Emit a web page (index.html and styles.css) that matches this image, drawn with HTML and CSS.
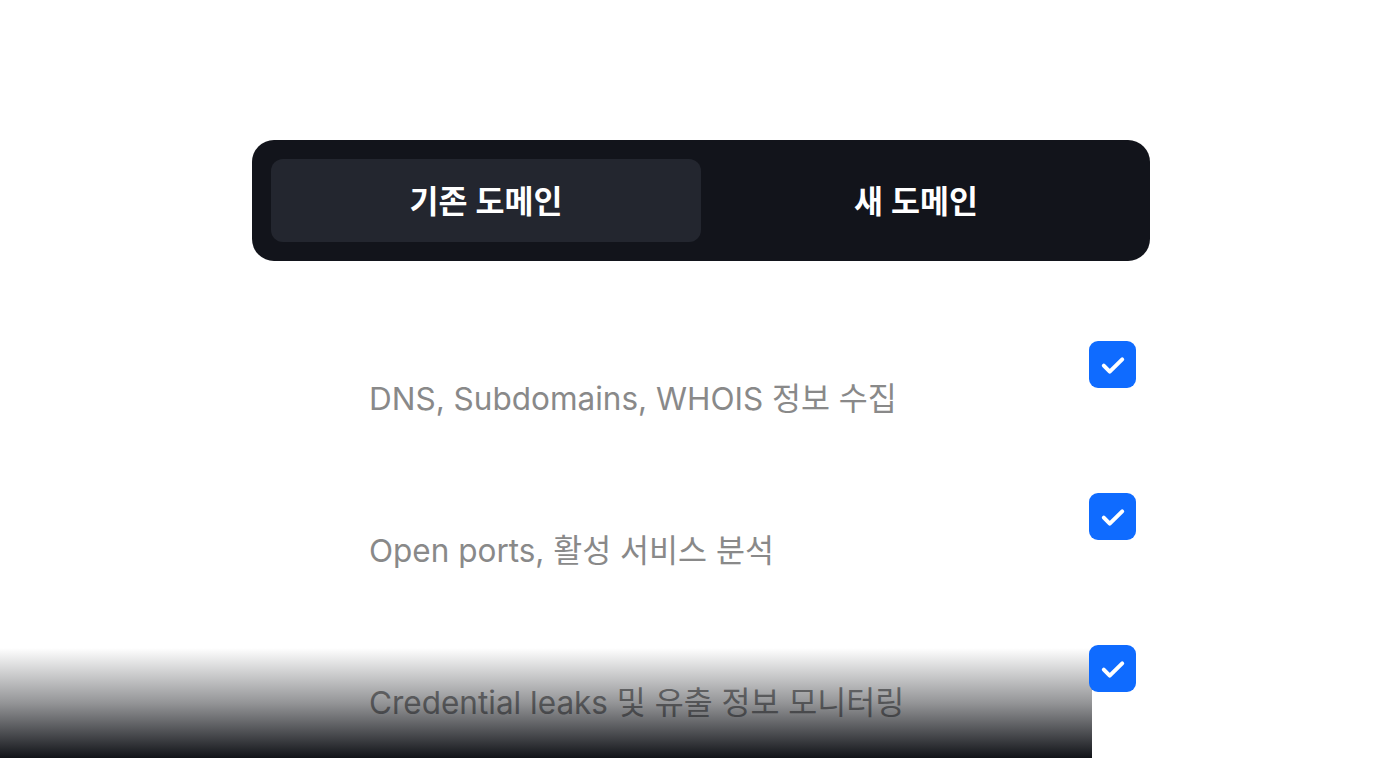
FILE: index.html
```html
<!DOCTYPE html>
<html lang="ko">
<head>
<meta charset="utf-8">
<link rel="stylesheet" href="styles.css">
</head>
<body>
<main class="page">
  <div class="tabs">
    <button class="tab tab-active">기존 도메인</button>
    <button class="tab">새 도메인</button>
  </div>
  <ul class="features">
    <li class="feature">
      <span class="feature-text">DNS, Subdomains, WHOIS 정보 수집</span>
      <span class="check"><svg viewBox="0 0 24 24" width="34" height="34"><path d="M5.5 12.5l4.2 4.2L18.5 8" fill="none" stroke="#fff" stroke-width="2.8" stroke-linecap="round" stroke-linejoin="round"/></svg></span>
    </li>
    <li class="feature">
      <span class="feature-text">Open ports, 활성 서비스 분석</span>
      <span class="check"><svg viewBox="0 0 24 24" width="34" height="34"><path d="M5.5 12.5l4.2 4.2L18.5 8" fill="none" stroke="#fff" stroke-width="2.8" stroke-linecap="round" stroke-linejoin="round"/></svg></span>
    </li>
    <li class="feature feature-last">
      <span class="feature-text">Credential leaks 및 유출 정보 모니터링</span>
      <span class="check"><svg viewBox="0 0 24 24" width="34" height="34"><path d="M5.5 12.5l4.2 4.2L18.5 8" fill="none" stroke="#fff" stroke-width="2.8" stroke-linecap="round" stroke-linejoin="round"/></svg></span>
    </li>
  </ul>
</main>
<div class="fade"></div>
</body>
</html>
```

FILE: styles.css
```css
html, body {
  margin: 0;
  padding: 0;
  background: #ffffff;
  overflow: hidden;
}
body {
  font-family: Inter, "Noto Sans CJK KR", sans-serif;
  width: 1400px;
  height: 758px;
}
.page {
  width: 898px;
  padding-top: 140px;
  margin-left: 252px;
}
.tabs {
  display: grid;
  grid-template-columns: 1fr 1fr;
  background: #12141b;
  border-radius: 22px;
  padding: 19px;
}
.tab {
  height: 83px;
  padding: 0 0 3px;
  border: 0;
  border-radius: 12px;
  background: transparent;
  color: #ffffff;
  font-family: Inter, "Noto Sans CJK KR", sans-serif;
  font-size: 31.5px;
  font-weight: 600;
  cursor: pointer;
}
.tab-active {
  background: #23262f;
}
.features {
  list-style: none;
  margin: 0;
  padding: 80px 14px 0 117px;
}
.feature {
  display: flex;
  justify-content: space-between;
  align-items: flex-start;
  height: 152px;
}
.feature-last {
  height: auto;
}
.feature-text {
  margin-top: 36px;
  font-size: 31.5px;
  line-height: 44px;
  color: #898989;
}
.check {
  position: relative;
  z-index: 2;
  width: 47px;
  height: 47px;
  border-radius: 9px;
  background: #0f6bff;
  display: flex;
  align-items: center;
  justify-content: center;
}
.fade {
  position: absolute;
  left: 0;
  bottom: 0;
  width: 1092px;
  height: 110px;
  background: linear-gradient(to bottom, rgba(17, 19, 24, 0) 0%, rgba(17, 19, 24, 0.45) 50%, #111318 100%);
  z-index: 1;
}
```
